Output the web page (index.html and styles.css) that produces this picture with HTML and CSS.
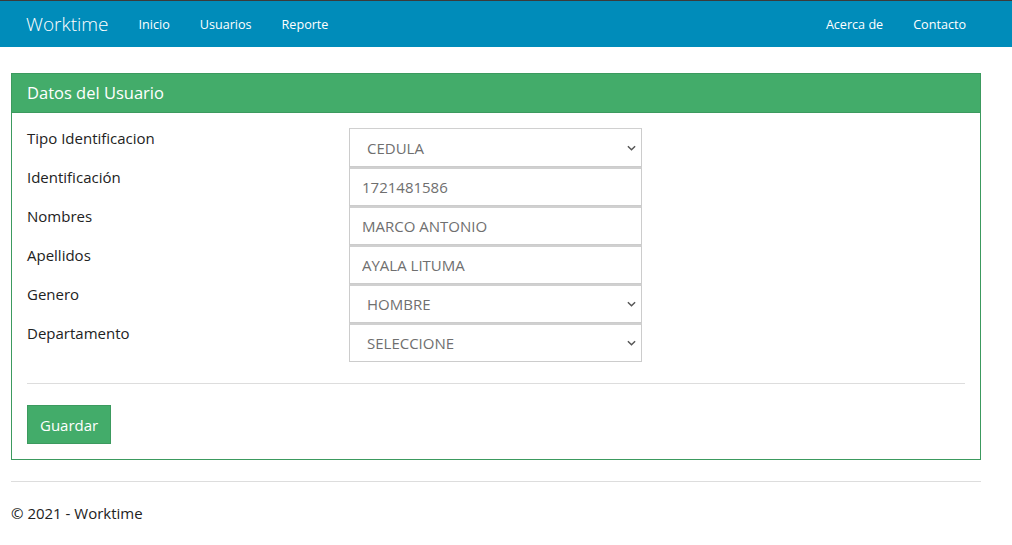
FILE: index.html
```html
<!DOCTYPE html>
<html lang="es">
<head>
<meta charset="utf-8">
<title>Worktime</title>
<link rel="stylesheet" href="styles.css">
</head>
<body>
<header class="navbar">
  <div class="nav-inner">
    <a class="brand" href="#">Worktime</a>
    <nav class="nav-left">
      <a href="#">Inicio</a>
      <a href="#">Usuarios</a>
      <a href="#">Reporte</a>
    </nav>
    <nav class="nav-right">
      <a href="#">Acerca de</a>
      <a href="#">Contacto</a>
    </nav>
  </div>
</header>
<main class="container">
  <section class="panel">
    <div class="panel-heading">Datos del Usuario</div>
    <div class="panel-body">
      <div class="form-grid">
        <label class="lbl">Tipo Identificacion</label>
        <div class="field">
          <select class="ctl sel"><option>CEDULA</option></select>
        </div>
        <label class="lbl">Identificación</label>
        <div class="field"><input class="ctl" value="1721481586"></div>
        <label class="lbl">Nombres</label>
        <div class="field"><input class="ctl" value="MARCO ANTONIO"></div>
        <label class="lbl">Apellidos</label>
        <div class="field"><input class="ctl" value="AYALA LITUMA"></div>
        <label class="lbl">Genero</label>
        <div class="field">
          <select class="ctl sel"><option>HOMBRE</option></select>
        </div>
        <label class="lbl">Departamento</label>
        <div class="field">
          <select class="ctl sel"><option>SELECCIONE</option></select>
        </div>
      </div>
      <hr class="sep">
      <button class="btn">Guardar</button>
    </div>
  </section>
  <hr class="foot-sep">
  <footer class="footer">© 2021 - Worktime</footer>
</main>
</body>
</html>
```
FILE: styles.css
```css
* { box-sizing: border-box; }
html, body { margin: 0; padding: 0; }
body {
  font-family: "Open Sans", "Liberation Sans", sans-serif;
  font-size: 15px;
  color: #222;
  background: #fff;
}
.navbar {
  background: #008cba;
  border-top: 1px solid #3b3b3b;
  height: 47px;
}
.nav-inner {
  width: 970px;
  margin-left: 11px;
  padding: 0 15px;
  height: 46px;
  display: flex;
  align-items: center;
}
.navbar a {
  color: #fff;
  text-decoration: none;
}
.brand {
  font-size: 19px;
  font-weight: 300;
  margin-right: 15px;
}
.nav-left, .nav-right {
  display: flex;
  font-size: 12.6px;
}
.nav-left a, .nav-right a { padding: 0 15px; }
.nav-right { margin-left: auto; }
.nav-right a:last-child { padding-right: 0; }

.container {
  width: 970px;
  margin-left: 11px;
  padding-top: 26px;
}
.panel {
  border: 1px solid #3c9a5f;
}
.panel-heading {
  background: #43ac6a;
  color: #fff;
  font-size: 16.5px;
  height: 39px;
  line-height: 38px;
  padding: 0 15px;
  border-bottom: 1px solid #3c9a5f;
}
.panel-body {
  padding: 15px;
}
.form-grid {
  display: grid;
  grid-template-columns: 322px 293px;
  grid-auto-rows: 39px;
}
.lbl {
  font-size: 15px;
  line-height: 20px;
  color: #222;
}
.ctl {
  display: block;
  width: 293px;
  height: 39px;
  border: 1px solid #ccc;
  border-top: 2px solid #d0d0d0;
  background: #fff;
  font-family: "Open Sans", "Liberation Sans", sans-serif;
  font-size: 15px;
  color: #6f6f6f;
  padding: 0 12px;
  margin: 0;
  outline: none;
  border-radius: 0;
}
.form-grid .field:nth-child(2) .ctl { border-top-width: 1px; }
.sel {
  -webkit-appearance: none;
  appearance: none;
  padding-left: 17px;
  background-image: url("data:image/svg+xml;utf8,<svg xmlns='http://www.w3.org/2000/svg' width='10' height='6' viewBox='0 0 10 6'><path d='M1 1l4 4 4-4' fill='none' stroke='%23555' stroke-width='1.6'/></svg>");
  background-repeat: no-repeat;
  background-position: right 5px center;
  background-size: 9px 6px;
}
.sep {
  border: 0;
  border-top: 1px solid #ddd;
  margin: 21px 0;
}
.btn {
  background: #43ac6a;
  border: 1px solid #3c9a5f;
  color: #fff;
  font-family: "Open Sans", "Liberation Sans", sans-serif;
  font-size: 15px;
  height: 39px;
  padding: 0 12px;
  border-radius: 0;
}
.foot-sep {
  border: 0;
  border-top: 1px solid #ddd;
  margin: 21px 0 0;
}
.footer {
  font-size: 15px;
  padding-top: 21px;
  color: #222;
}
```
